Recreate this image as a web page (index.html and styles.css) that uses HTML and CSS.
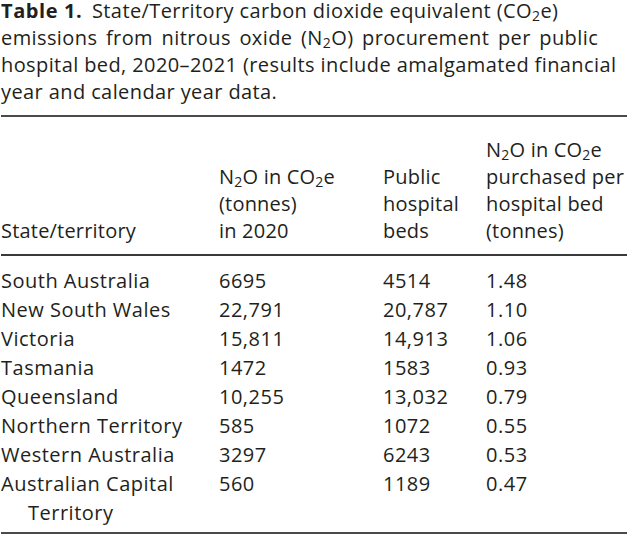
FILE: index.html
```html
<!DOCTYPE html>
<html lang="en">
<head>
<meta charset="utf-8">
<title>Table 1</title>
<link rel="stylesheet" href="styles.css">
</head>
<body>
<figure class="tbl">
  <p class="caption"><b class="label">Table 1.</b> State/Territory carbon dioxide equivalent (CO<sub>2</sub>e)<br><span class="spread">emissions from nitrous oxide (N<sub>2</sub>O) procurement per public</span><br>hospital bed, 2020–2021 (results include amalgamated financial<br>year and calendar year data.</p>
  <table class="data">
    <thead>
      <tr>
        <th class="c1">State/territory</th>
        <th class="c2">N<sub>2</sub>O in CO<sub>2</sub>e<br>(tonnes)<br>in 2020</th>
        <th class="c3">Public<br>hospital<br>beds</th>
        <th class="c4">N<sub>2</sub>O in CO<sub>2</sub>e<br>purchased per<br>hospital bed<br>(tonnes)</th>
      </tr>
    </thead>
    <tbody>
      <tr><td class="name">South Australia</td><td>6695</td><td>4514</td><td>1.48</td></tr>
      <tr><td class="name">New South Wales</td><td>22,791</td><td>20,787</td><td>1.10</td></tr>
      <tr><td class="name">Victoria</td><td>15,811</td><td>14,913</td><td>1.06</td></tr>
      <tr><td class="name">Tasmania</td><td>1472</td><td>1583</td><td>0.93</td></tr>
      <tr><td class="name">Queensland</td><td>10,255</td><td>13,032</td><td>0.79</td></tr>
      <tr><td class="name">Northern Territory</td><td>585</td><td>1072</td><td>0.55</td></tr>
      <tr><td class="name">Western Australia</td><td>3297</td><td>6243</td><td>0.53</td></tr>
      <tr class="last"><td class="name">Australian Capital<br>Territory</td><td>560</td><td>1189</td><td>0.47</td></tr>
    </tbody>
  </table>
</figure>
</body>
</html>
```

FILE: styles.css
```css
html, body {
  margin: 0;
  padding: 0;
  background: #ffffff;
}

body {
  font-family: "Open Sans", "Liberation Sans", sans-serif;
  font-size: 20px;
  color: #231f20;
}

.tbl {
  margin: 0;
  width: 626px;
  padding-left: 1px;
}

.caption {
  margin: -3px 0 0 0;
  line-height: 27px;
  padding-bottom: 10px;
  border-bottom: 2px solid #4a4a4a;
  white-space: nowrap;
  letter-spacing: 0.4px;
}

.spread {
  word-spacing: 3px;
}

.label {
  font-weight: 700;
  margin-right: 4px;
  letter-spacing: 0.6px;
}

sub {
  font-size: 0.7em;
  line-height: 0;
  vertical-align: -0.22em;
}

.data {
  width: 100%;
  border-collapse: collapse;
  table-layout: fixed;
}

.data th {
  font-weight: 400;
  text-align: left;
  vertical-align: bottom;
  line-height: 27px;
  padding: 19px 0 10px 0;
  border-bottom: 2px solid #3a3a3a;
  white-space: nowrap;
  letter-spacing: 0.2px;
}

.c1 { width: 218px; }
.c2 { width: 164px; }
.c3 { width: 103px; }
.c4 { width: auto; }

.data td {
  line-height: 29px;
  padding: 0;
  vertical-align: top;
  white-space: nowrap;
  letter-spacing: 0.5px;
}

.data tbody tr:first-child td {
  padding-top: 10px;
}

.data tr.last td {
  padding-bottom: 5px;
  border-bottom: 2px solid #4a4a4a;
}

.data td.name {
  padding-left: 27px;
  text-indent: -27px;
}
```
